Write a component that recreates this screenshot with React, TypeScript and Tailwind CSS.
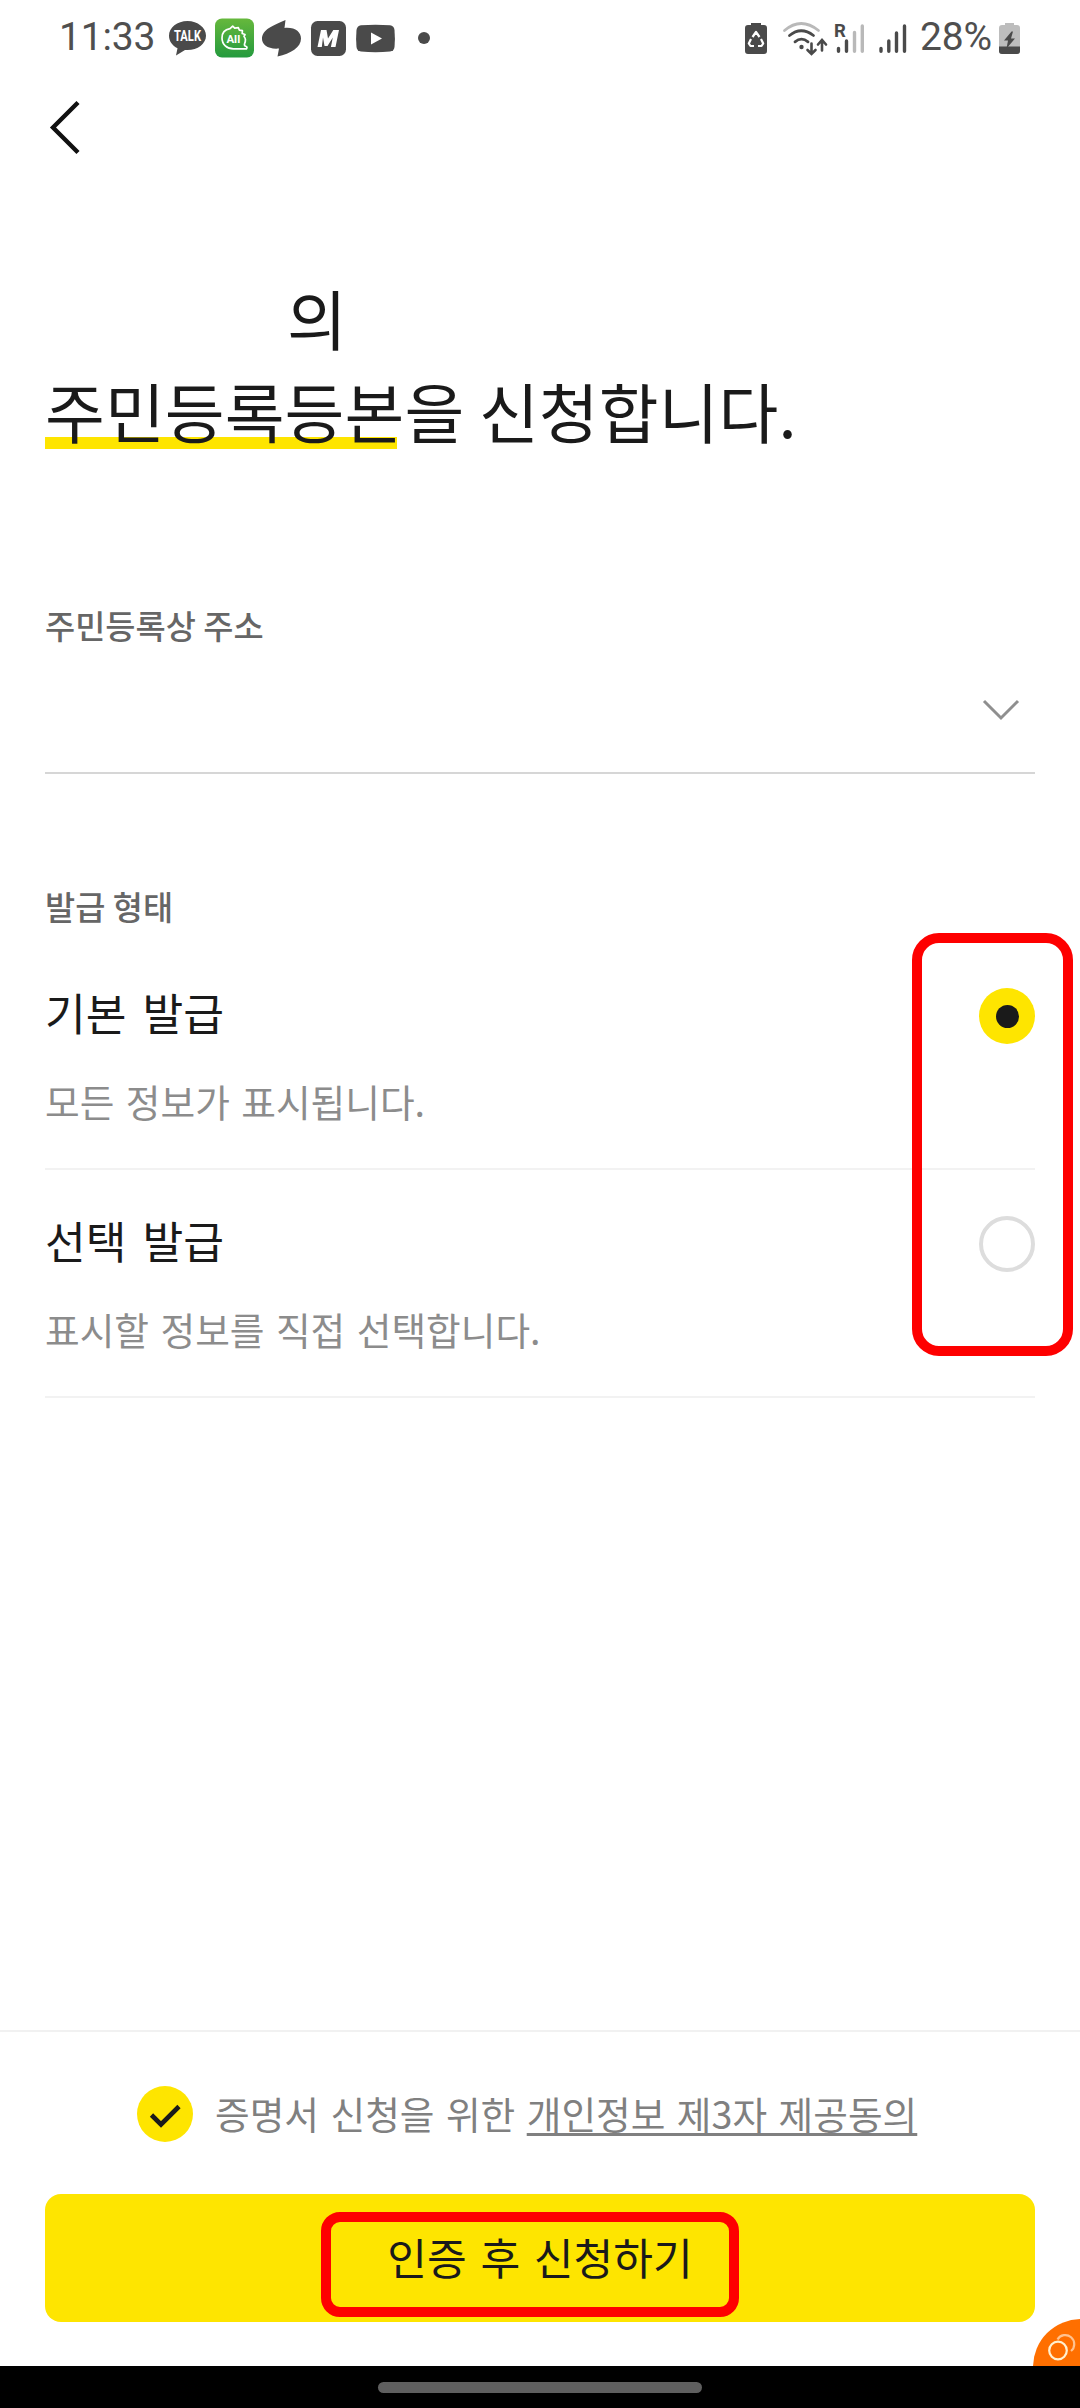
import type { ReactNode } from "react";

const kr = "font-['Noto_Sans_CJK_KR',sans-serif]";

export default function App() {
  return (
    <div className={`relative flex h-[2408px] w-[1080px] flex-col overflow-hidden bg-white text-[#1a1a1a] ${kr}`}>
      <StatusBar />

      {/* Top nav */}
      <header className="flex h-[102px] shrink-0 items-center px-[49px]">
        <button aria-label="뒤로" className="flex">
          <svg width="32" height="56" viewBox="0 0 32 56" fill="none" stroke="#111" strokeWidth="4.4">
            <path d="M29 3.5 4 28.5 29 53.5" />
          </svg>
        </button>
      </header>

      <main className="flex grow flex-col px-[45px]">
        <h1 className="mt-[93px] text-[65px] leading-[93px] tracking-[0.1px]">
          <span className="block pl-[242px]">의</span>
          <span className="block whitespace-nowrap">
            <span className="bg-[linear-gradient(#fee500,#fee500)] bg-[length:352px_12px] bg-[position:0_74px] bg-no-repeat">
              주민등록등본
            </span>
            을 신청합니다.
          </span>
        </h1>

        {/* Address select */}
        <section className="mt-[144px] border-b-2 border-[#d6d6d6]">
          <div className="text-[32.8px] leading-[48px] font-medium text-[#666]">주민등록상 주소</div>
          <div className="flex h-[123px] items-center justify-end pr-[15px]">
            <svg width="38" height="24" viewBox="0 0 38 24" fill="none" stroke="#8f8f8f" strokeWidth="3">
              <path d="M2 2 19 19 36 2" />
            </svg>
          </div>
        </section>

        {/* Issue type */}
        <section className="mt-[108px]">
          <div className="mb-[12px] text-[32.8px] leading-[48px] font-medium text-[#666]">발급 형태</div>
          <Option title="기본 발급" desc="모든 정보가 표시됩니다." checked />
          <Option title="선택 발급" desc="표시할 정보를 직접 선택합니다." />
        </section>
      </main>

      <footer className="flex h-[336px] shrink-0 flex-col border-t-2 border-[#f1f1f1] px-[45px]">
        <div className="mt-[54px] flex h-[56px] items-center pl-[92px]">
          <svg width="56" height="56" viewBox="0 0 56 56">
            <circle cx="28" cy="28" r="28" fill="#fee500" />
            <path d="M14.5 29 24 38.500 42 20.500" fill="none" stroke="#1a1a1a" strokeWidth="4.600" />
          </svg>
          <p className="-mt-[3px] ml-[22px] text-[37.7px] leading-[56px] whitespace-nowrap text-[#808080] [word-spacing:3px]">
            증명서 신청을 위한{" "}
            <span className="underline decoration-[3px] underline-offset-[4px]">개인정보 제3자 제공동의</span>
          </p>
        </div>
        <button className="mt-[52px] flex h-[128px] items-center justify-center rounded-[16px] bg-[#fee500] pb-[4px] text-[43.2px] leading-[60px] [word-spacing:4px]">
          인증 후 신청하기
        </button>
      </footer>

      {/* Gesture bar */}
      <div className="flex h-[42px] shrink-0 justify-center bg-black pt-[16px]">
        <div className="h-[11px] w-[324px] rounded-full bg-[#5f5f5f]" />
      </div>

      {/* Floating shortcut, tucked behind the gesture bar */}
      <div className="absolute right-0 bottom-[42px] flex">
        <svg width="47" height="47" viewBox="0 0 47 47">
          <circle cx="48" cy="48" r="48" fill="#ff6f00" />
          <path d="M24.500 20.500A9 9 0 1 1 38 32" fill="none" stroke="#ffc28f" strokeWidth="2.200" />
          <circle cx="25" cy="31.500" r="8.800" fill="none" stroke="#fff0cf" strokeWidth="2.200" />
        </svg>
      </div>

      {/* Highlight frames */}
      <div className="absolute top-[933px] left-[912px] h-[423px] w-[161px] rounded-[27px] border-[10px] border-[#fe0000]" />
      <div className="absolute top-[2212px] left-[321px] h-[105px] w-[418px] rounded-[19px] border-[10px] border-[#fe0000]" />
    </div>
  );
}

function Option({ title, desc, checked }: { title: string; desc: string; checked?: boolean }) {
  return (
    <div className="flex h-[228px] justify-between border-b-2 border-[#f2f2f2] pt-[46px]">
      <div>
        <div className="-mt-[4px] text-[44.3px] leading-[56px] [word-spacing:6px]">{title}</div>
        <div className="mt-[35px] text-[37.7px] leading-[52px] text-[#8c8c8c] [word-spacing:3px]">{desc}</div>
      </div>
      {checked ? (
        <div className="flex size-[56px] items-center justify-center rounded-full bg-[#fee500]">
          <div className="size-[23px] rounded-full bg-[#1a1a1a]" />
        </div>
      ) : (
        <div className="size-[56px] rounded-full border-4 border-[#ddd]" />
      )}
    </div>
  );
}

function StatusBar() {
  return (
    <div className="flex h-[76px] shrink-0 items-center px-[60px] font-[Roboto,sans-serif] text-[39px] leading-[74px] text-[#4f4f4f]">
      <span className="-ml-px w-[110px] pb-[2px] tracking-[-0.2px] whitespace-nowrap">11:33</span>
      <Icon w={37}>
        <path
          d="M18.500 1C8.300 1 0 7.600 0 15.800c0 5.400 3.300 9.900 8.500 12.500L7 35.500l9-5.500c.8.100 1.700.100 2.500.100C28.700 30.100 37 23.800 37 15.800S28.700 1 18.500 1Z"
          fill="#4a4a4a"
        />
        <text x="18.500" y="20.500" textAnchor="middle" textLength="27" lengthAdjust="spacingAndGlyphs" fontSize="14" fontWeight="700" fill="#fff">
          TALK
        </text>
      </Icon>
      <Icon w={39} h={40} className="ml-[9px]">
        <defs>
          <linearGradient id="all" x1="0" y1="0" x2="0" y2="1">
            <stop offset="0" stopColor="#66b83c" />
            <stop offset="1" stopColor="#249a3e" />
          </linearGradient>
        </defs>
        <rect y="0.500" width="39" height="39" rx="7" fill="url(#all)" />
        <path
          d="M29.500 26c1.500-3.500 1-6-.5-7.500l1-2-2.800-1 .2-2.800-3-.5-1-2.500-3.700.5-2-2-2.700 2.500C10 11.500 7 15 7 20c0 6.500 5 10.800 11.500 10.800H31.500c.8-.8.500-2-.3-2.300-1.200-.4-2-1.200-1.700-2.500Z"
          fill="none"
          stroke="#fff"
          strokeWidth="1.700"
          strokeLinejoin="round"
        />
        <text x="18.300" y="24.500" textAnchor="middle" fontSize="11.500" fontWeight="700" fill="#fff">
          All
        </text>
      </Icon>
      <Icon w={39} className="ml-[8px]">
        <path
          d="M23.500 0 22.500 8C33 7 39 12 39 18.500 39 27.500 29 33.500 15.500 36.500L17 28.500C6 29.500 0 24.500 0 19 0 9.500 11 5.500 23.500 0Z"
          fill="#4a4a4a"
        />
      </Icon>
      <Icon w={35} className="ml-[10px]">
        <rect y="1" width="35" height="35" rx="6.500" fill="#4a4a4a" />
        <path d="M6.500 27 10 10h5.500l1.500 8.500L22.300 10H28l-3.500 17h-4.600l1.900-9.500L16.500 26h-3L12 17.500 10.800 27Z" fill="#fff" />
      </Icon>
      <Icon w={39} className="ml-[10px]">
        <path
          d="M5 5.300Q19.500 4 34 5.300q4 .6 4.500 4.700.8 8.500 0 17-.5 4-4.500 4.500-14.500 1.300-29 0Q1 31 .5 27-.3 18.500.5 10 1 6 5 5.300Z"
          fill="#4a4a4a"
        />
        <path d="M15 12.500 26 18.500 15 24.500Z" fill="#fff" />
      </Icon>
      <div className="ml-[23px] size-[12px] rounded-full bg-[#4a4a4a]" />

      <div className="ml-auto flex items-center">
        {/* Battery saver */}
        <Icon w={22}>
          <path d="M6 5V3h10v2h3q3 0 3 3v23q0 3-3 3H3q-3 0-3-3V8q0-3 3-3Z" fill="#4a4a4a" />
          <path
            d="M7.500 17 11 12l3.500 5M16 19 18.200 23.500 16.500 26h-3.500M9 26H5.500L3.800 23.500 6 19"
            fill="none"
            stroke="#fff"
            strokeWidth="2.200"
            strokeLinejoin="round"
          />
        </Icon>
        {/* Wifi */}
        <Icon w={44} className="ml-[16px]">
          <g fill="none" strokeWidth="2.800" strokeLinecap="round">
            <path d="M1.500 10.500Q18-3.500 35.500 10.500" stroke="#b9b9b9" />
            <path d="M6.500 15.500Q18 6 30.500 15.500M12 21.800Q18.500 16.500 25 21.800" stroke="#4a4a4a" />
            <path d="M28.500 23.500v10M24.500 30l4 4 4-4M39 30.500v-10M35 24.500l4-4.500 4 4.500" stroke="#4a4a4a" strokeWidth="2.600" />
          </g>
          <circle cx="18.500" cy="27" r="2.200" fill="#4a4a4a" />
        </Icon>
        {/* Roaming signal */}
        <Icon w={30} className="ml-[7px]">
          <text x="0" y="17" fontSize="18.500" fontWeight="700" fill="#4a4a4a">
            R
          </text>
          <g strokeWidth="3.400" strokeLinecap="round" stroke="#4a4a4a">
            <path d="M4.500 28.500v2.700M12.500 21v10.200" />
            <path d="M20.500 12.500v18.700M28.300 6v25.200" stroke="#b9b9b9" />
          </g>
        </Icon>
        {/* Signal */}
        <Icon w={28} className="ml-[15px]">
          <g strokeWidth="3.400" strokeLinecap="round" stroke="#4a4a4a">
            <path d="M2 28.500v2.700M9.800 21v10.200M17.500 13v18.200M25.500 6v25.200" />
          </g>
        </Icon>
        <span className="ml-[13px] w-[79px] pb-[2px] tracking-[-0.2px] whitespace-nowrap">28%</span>
        <Icon w={21}>
          <path d="M6 5V3h9v2h3q3 0 3 3v23q0 3-3 3H3q-3 0-3-3V8q0-3 3-3Z" fill="#bdbdbd" />
          <path d="M0 26.500h21V31q0 3-3 3H3q-3 0-3-3Z" fill="#4a4a4a" />
          <path d="M12.500 11.500 5 20.500h4L7.500 28.500 16 18.500h-4l2-7Z" fill="#4a4a4a" />
        </Icon>
      </div>
    </div>
  );
}

function Icon({ w, h = 37, className, children }: { w: number; h?: number; className?: string; children: ReactNode }) {
  return (
    <svg width={w} height={h} viewBox={`0 0 ${w} ${h}`} className={`shrink-0 overflow-visible ${className ?? ""}`}>
      {children}
    </svg>
  );
}
